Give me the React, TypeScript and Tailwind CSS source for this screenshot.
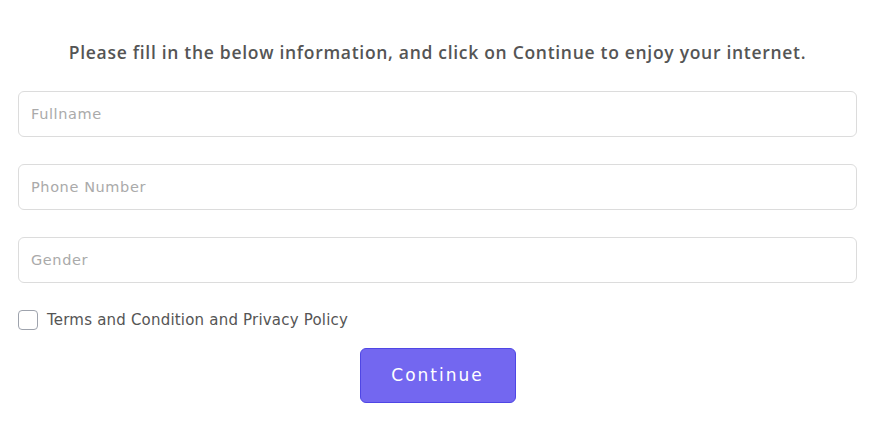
import { useState } from 'react';

const font = { fontFamily: '"DejaVu Sans", "Open Sans", sans-serif' };

export default function App() {
  const [agreed, setAgreed] = useState(false);

  return (
    <div className="w-[877px] h-[424px] bg-white" style={font}>
      <div className="pt-[40px] pl-[18px] pr-[20px]">
        {/* Heading */}
        <h1
          className="text-center text-[17.5px] font-semibold text-[#555555] tracking-[0.7px] leading-[24px]"
          style={{ fontFamily: '"Open Sans", sans-serif' }}
        >
          Please fill in the below information, and click on Continue to enjoy your internet.
        </h1>

        {/* Fields */}
        <form className="mt-[27px] flex flex-col gap-[27px]">
          <input
            className="h-[46px] w-full rounded-[6px] border border-[#dcdcdc] px-[12px] text-[14.5px] tracking-[0.6px] text-[#555] placeholder:text-[#aaaaaa] outline-none"
            placeholder="Fullname"
          />
          <input
            className="h-[46px] w-full rounded-[6px] border border-[#dcdcdc] px-[12px] text-[14.5px] tracking-[0.6px] text-[#555] placeholder:text-[#aaaaaa] outline-none"
            placeholder="Phone Number"
          />
          <input
            className="h-[46px] w-full rounded-[6px] border border-[#dcdcdc] px-[12px] text-[14.5px] tracking-[0.6px] text-[#555] placeholder:text-[#aaaaaa] outline-none"
            placeholder="Gender"
          />
        </form>

        {/* Terms */}
        <label className="mt-[27px] flex items-center gap-[9px] cursor-pointer">
          <span
            onClick={() => setAgreed(!agreed)}
            className="h-[20px] w-[20px] rounded-[4px] border border-[#9ea3ad] bg-white"
          />
          <span className="text-[15px] leading-[20px] tracking-[0.2px] text-[#555555]">
            Terms and Condition and Privacy Policy
          </span>
        </label>

        {/* Continue */}
        <div className="mt-[18px] flex justify-center">
          <button className="h-[55px] w-[156px] rounded-[6px] border border-[#4f46e5] bg-[#7367f0] text-[17px] tracking-[2px] text-white">
            Continue
          </button>
        </div>
      </div>
    </div>
  );
}
